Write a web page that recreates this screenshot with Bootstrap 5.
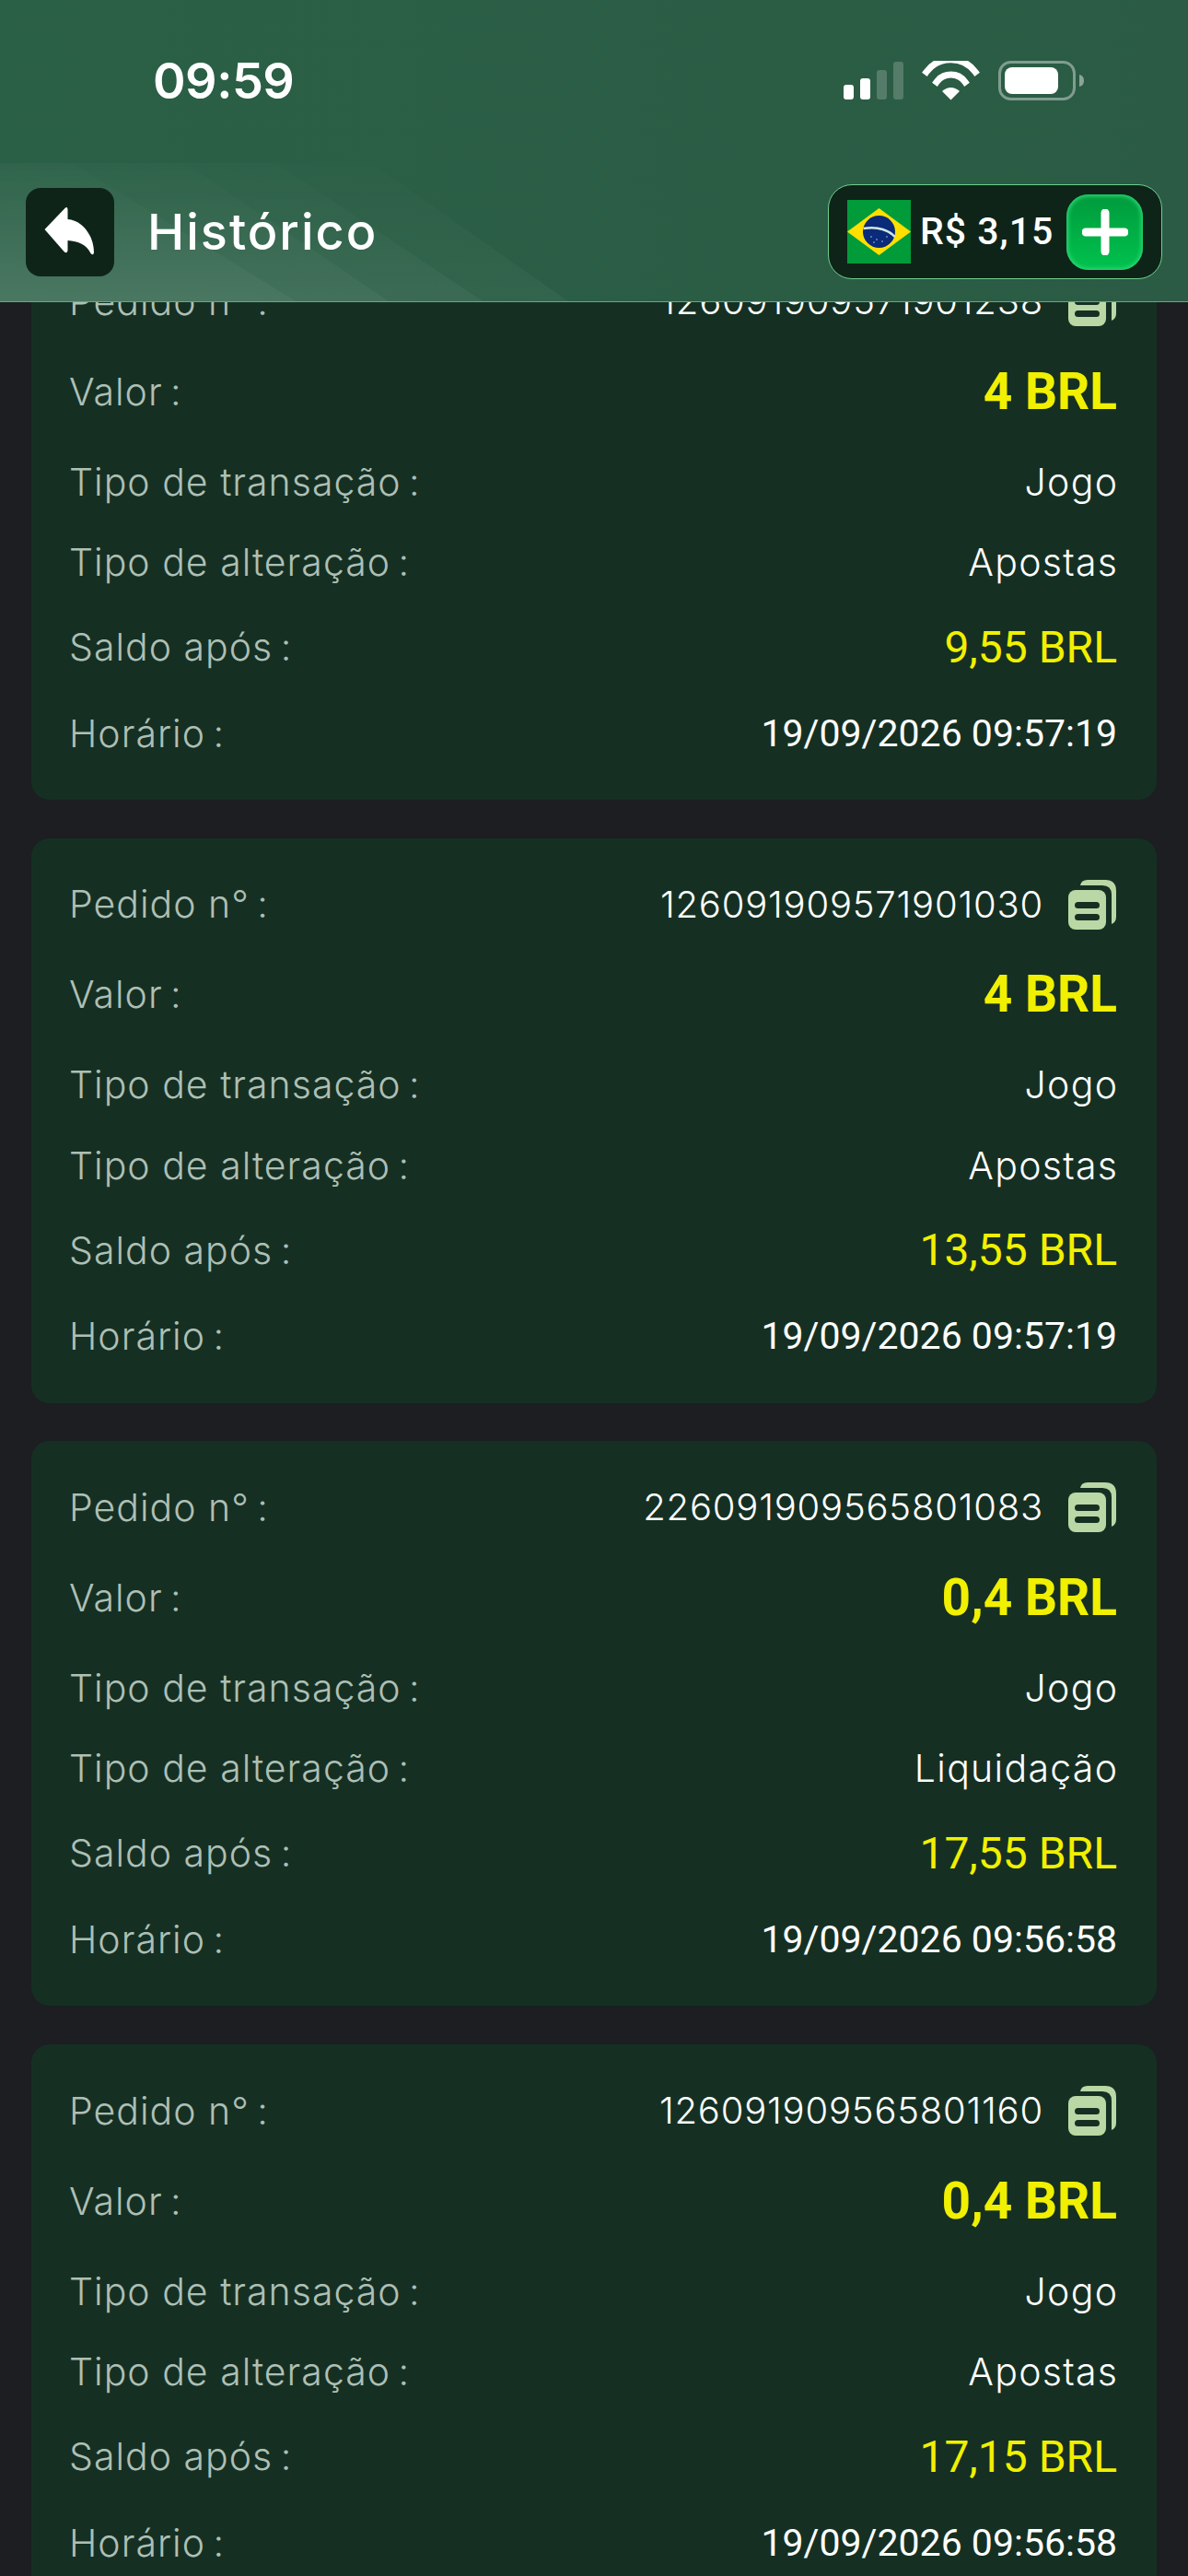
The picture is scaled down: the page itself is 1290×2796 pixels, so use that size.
<!DOCTYPE html>
<html lang="pt-BR">
<head>
<meta charset="utf-8">
<title>Histórico</title>
<link href="https://cdn.jsdelivr.net/npm/bootstrap@5.3.0/dist/css/bootstrap.min.css" rel="stylesheet">
<style>
html,body{margin:0;height:2796px;overflow:hidden;background:#1c1e22}
.app-screen{height:2796px;background:#1c1e22;font-family:Inter,"Noto Sans",sans-serif}
.top-head{height:328px;background:linear-gradient(90deg,#2a6046,#2b5b44);border-bottom:1px solid #5fae7e;position:relative;overflow:hidden}
.head-art{position:absolute;left:0;top:0}
.status-line{height:176px;padding:0 113px 0 166px;position:relative}
.clock{font-family:Inter,sans-serif;font-weight:600;font-size:54px;letter-spacing:-.5px;color:#fff;line-height:1}
.nav-line{height:151px;padding:0 28px;position:relative}
.back-btn{width:96px;height:96px;border-radius:16px;background:#0f2419;border:0;padding:0}
.back-btn svg{display:block}
.page-title{margin-left:36px;font-size:54px;font-weight:500;letter-spacing:2px;color:#fff;line-height:1}
.bal-pill{width:363px;height:103px;border:1px solid #6ed08f;border-radius:26px;background:#0f2419;padding:0 20px 0 20px}
.bal-text{font-family:Roboto,sans-serif;font-weight:500;font-size:41px;letter-spacing:1px;color:#fff;margin-left:10px;line-height:1;white-space:nowrap}
.plus-btn{width:83px;height:82px;border-radius:24px;background:linear-gradient(#009a3c,#00c24e);box-shadow:inset 0 0 4px 2px #2bd673;border:0;padding:0}
.plus-btn svg{display:block;margin:auto}
.scroll-area{height:2468px;overflow:hidden}
.scroll-inner{margin-top:-73px;padding:0 34px;display:flex;flex-direction:column;gap:41.7px}
.rec-card{background:#153023;border-radius:20px;padding:23px 43px 29px 41px;height:613px;flex:none}
.rec-line{color:#fff;white-space:nowrap}
.h-a{height:98px}.h-b{height:77px}.h-c{height:107px}.h-d{height:80px}
.lbl{font-weight:300;font-size:41px;letter-spacing:1px;color:#aebfb5;line-height:1}
.val{font-weight:300;font-size:41px;letter-spacing:1.3px;margin-right:-1.3px;color:#fff;line-height:1}
.order{font-weight:300;font-size:40px;letter-spacing:.8px;color:#fff;line-height:1}
.num{font-family:Roboto,sans-serif;font-size:48px;font-weight:400;color:#f0f000;line-height:1}
.big{font-family:Roboto,sans-serif;font-size:55px;font-weight:700;color:#f0f000;line-height:1}
.dt{font-family:Roboto,sans-serif;font-size:41px;font-weight:400;color:#fff;line-height:1}
.copy-ico{margin:0 1px 0 27px;flex:none;display:block}
</style>
</head>
<body>
<div class="app-screen">
  <header class="top-head">
    <svg class="head-art" width="1290" height="328" viewBox="0 0 1290 328" aria-hidden="true">
      <defs><linearGradient id="fadeA" gradientUnits="userSpaceOnUse" x1="0" y1="327" x2="0" y2="177"><stop offset="0" stop-color="#fff" stop-opacity=".04"/><stop offset="1" stop-color="#fff" stop-opacity=".008"/></linearGradient></defs>
      <polygon points="0,177 78,177 321,327 0,327" fill="url(#fadeA)"/>
      <polygon points="0,177 201,177 422,327 0,327" fill="url(#fadeA)"/>
      <polygon points="0,177 300,177 524,327 0,327" fill="url(#fadeA)"/>
      <polygon points="0,177 403,177 617,327 0,327" fill="url(#fadeA)"/>
    </svg>
    <div class="status-line d-flex align-items-center justify-content-between">
      <span class="clock">09:59</span>
      <svg width="261" height="44" viewBox="916 65 261 44" aria-hidden="true">
        <rect x="916" y="91" width="11" height="16" rx="3" fill="#fff"/>
        <rect x="934" y="84" width="11" height="23" rx="3" fill="#fff"/>
        <rect x="952" y="75" width="11" height="32" rx="3" fill="#fff" fill-opacity=".2"/>
        <rect x="970" y="66" width="11" height="41" rx="3" fill="#fff" fill-opacity=".2"/>
        <path d="M1006 80a33 33 0 0 1 53 0" fill="none" stroke="#fff" stroke-width="7" stroke-linecap="square" transform="translate(0 -3)"/>
        <path d="M1017 89a19 19 0 0 1 31 0" fill="none" stroke="#fff" stroke-width="7" stroke-linecap="square" transform="translate(0 -1)"/>
        <path d="M1023 98q9.500-8 19 0l-9.500 9.500z" fill="#fff"/>
        <rect x="1085.500" y="66.500" width="81" height="40" rx="12" fill="none" stroke="#fff" stroke-opacity=".4" stroke-width="3"/>
        <rect x="1091" y="72" width="58" height="29" rx="8" fill="#fff"/>
        <path d="M1172 80q5 1 5 6.500t-5 6.500z" fill="#fff" fill-opacity=".45"/>
      </svg>
    </div>
    <div class="nav-line d-flex align-items-center justify-content-between">
      <div class="d-flex align-items-center">
        <button class="back-btn" type="button" aria-label="Voltar">
          <svg width="96" height="96" viewBox="0 0 96 96"><path d="M43 21.500q2-1.500 2.500 1.500v11c16 1 28.500 18 28.500 36q-.5 4-3.500 1c-5-10-13-13-25-14v11q-1 4-4 1l-21-24z" fill="#fff"/></svg>
        </button>
        <span class="page-title">Histórico</span>
      </div>
      <div class="bal-pill d-flex align-items-center">
        <svg width="69" height="69" viewBox="0 0 69 69" class="flex-none" aria-hidden="true">
          <rect width="69" height="69" fill="#029b3a"/>
          <polygon points="34.500,9 69,34.500 34.500,60 0,34.500" fill="#fedf00"/>
          <circle cx="34.500" cy="34.500" r="17.500" fill="#0a2a7a"/>
          <path d="M17.500 31q12-2 21 1t13 8" fill="none" stroke="#cfe6e0" stroke-width="2.500"/>
          <g fill="#b8c8e8"><circle cx="26" cy="40" r=".8"/><circle cx="32" cy="43" r=".8"/><circle cx="38" cy="45" r=".8"/><circle cx="43" cy="40" r=".8"/><circle cx="29" cy="46" r=".8"/></g>
        </svg>
        <span class="bal-text flex-grow-1">R$ 3,15</span>
        <button class="plus-btn" type="button" aria-label="Adicionar">
          <svg width="50" height="50" viewBox="0 0 50 50"><path d="M25 4v42M4 25h42" stroke="#fff" stroke-width="9" stroke-linecap="round"/></svg>
        </button>
      </div>
    </div>
  </header>
  <main class="scroll-area">
    <div class="scroll-inner">

      <section class="rec-card">
        <div class="rec-line h-a d-flex align-items-center justify-content-between"><span class="lbl">Pedido n°&#8201;:</span><span class="d-flex align-items-center"><span class="order">126091909571901238</span><svg class="copy-ico" width="52" height="54" viewBox="0 0 52 54" aria-hidden="true"><path d="M13 6q1-6 8-6h19q12 0 12 12v28q0 6-5 8V16q0-10-10-10z" fill="#bad8a6"/><rect y="11" width="41" height="43" rx="8" fill="#bad8a6"/><rect x="7" y="24" width="27" height="7" rx="3.500" fill="#153023"/><rect x="7" y="37" width="27" height="7" rx="3.500" fill="#153023"/></svg></span></div>
        <div class="rec-line h-a d-flex align-items-center justify-content-between"><span class="lbl">Valor&#8201;:</span><span class="big">4 BRL</span></div>
        <div class="rec-line h-a d-flex align-items-center justify-content-between"><span class="lbl">Tipo de transação&#8201;:</span><span class="val">Jogo</span></div>
        <div class="rec-line h-b d-flex align-items-center justify-content-between"><span class="lbl">Tipo de alteração&#8201;:</span><span class="val">Apostas</span></div>
        <div class="rec-line h-c d-flex align-items-center justify-content-between"><span class="lbl">Saldo após&#8201;:</span><span class="num">9,55 BRL</span></div>
        <div class="rec-line h-d d-flex align-items-center justify-content-between"><span class="lbl">Horário&#8201;:</span><span class="dt">19/09/2026 09:57:19</span></div>
      </section>

      <section class="rec-card">
        <div class="rec-line h-a d-flex align-items-center justify-content-between"><span class="lbl">Pedido n°&#8201;:</span><span class="d-flex align-items-center"><span class="order">126091909571901030</span><svg class="copy-ico" width="52" height="54" viewBox="0 0 52 54" aria-hidden="true"><path d="M13 6q1-6 8-6h19q12 0 12 12v28q0 6-5 8V16q0-10-10-10z" fill="#bad8a6"/><rect y="11" width="41" height="43" rx="8" fill="#bad8a6"/><rect x="7" y="24" width="27" height="7" rx="3.500" fill="#153023"/><rect x="7" y="37" width="27" height="7" rx="3.500" fill="#153023"/></svg></span></div>
        <div class="rec-line h-a d-flex align-items-center justify-content-between"><span class="lbl">Valor&#8201;:</span><span class="big">4 BRL</span></div>
        <div class="rec-line h-a d-flex align-items-center justify-content-between"><span class="lbl">Tipo de transação&#8201;:</span><span class="val">Jogo</span></div>
        <div class="rec-line h-b d-flex align-items-center justify-content-between"><span class="lbl">Tipo de alteração&#8201;:</span><span class="val">Apostas</span></div>
        <div class="rec-line h-c d-flex align-items-center justify-content-between"><span class="lbl">Saldo após&#8201;:</span><span class="num">13,55 BRL</span></div>
        <div class="rec-line h-d d-flex align-items-center justify-content-between"><span class="lbl">Horário&#8201;:</span><span class="dt">19/09/2026 09:57:19</span></div>
      </section>

      <section class="rec-card">
        <div class="rec-line h-a d-flex align-items-center justify-content-between"><span class="lbl">Pedido n°&#8201;:</span><span class="d-flex align-items-center"><span class="order">226091909565801083</span><svg class="copy-ico" width="52" height="54" viewBox="0 0 52 54" aria-hidden="true"><path d="M13 6q1-6 8-6h19q12 0 12 12v28q0 6-5 8V16q0-10-10-10z" fill="#bad8a6"/><rect y="11" width="41" height="43" rx="8" fill="#bad8a6"/><rect x="7" y="24" width="27" height="7" rx="3.500" fill="#153023"/><rect x="7" y="37" width="27" height="7" rx="3.500" fill="#153023"/></svg></span></div>
        <div class="rec-line h-a d-flex align-items-center justify-content-between"><span class="lbl">Valor&#8201;:</span><span class="big">0,4 BRL</span></div>
        <div class="rec-line h-a d-flex align-items-center justify-content-between"><span class="lbl">Tipo de transação&#8201;:</span><span class="val">Jogo</span></div>
        <div class="rec-line h-b d-flex align-items-center justify-content-between"><span class="lbl">Tipo de alteração&#8201;:</span><span class="val">Liquidação</span></div>
        <div class="rec-line h-c d-flex align-items-center justify-content-between"><span class="lbl">Saldo após&#8201;:</span><span class="num">17,55 BRL</span></div>
        <div class="rec-line h-d d-flex align-items-center justify-content-between"><span class="lbl">Horário&#8201;:</span><span class="dt">19/09/2026 09:56:58</span></div>
      </section>

      <section class="rec-card">
        <div class="rec-line h-a d-flex align-items-center justify-content-between"><span class="lbl">Pedido n°&#8201;:</span><span class="d-flex align-items-center"><span class="order">126091909565801160</span><svg class="copy-ico" width="52" height="54" viewBox="0 0 52 54" aria-hidden="true"><path d="M13 6q1-6 8-6h19q12 0 12 12v28q0 6-5 8V16q0-10-10-10z" fill="#bad8a6"/><rect y="11" width="41" height="43" rx="8" fill="#bad8a6"/><rect x="7" y="24" width="27" height="7" rx="3.500" fill="#153023"/><rect x="7" y="37" width="27" height="7" rx="3.500" fill="#153023"/></svg></span></div>
        <div class="rec-line h-a d-flex align-items-center justify-content-between"><span class="lbl">Valor&#8201;:</span><span class="big">0,4 BRL</span></div>
        <div class="rec-line h-a d-flex align-items-center justify-content-between"><span class="lbl">Tipo de transação&#8201;:</span><span class="val">Jogo</span></div>
        <div class="rec-line h-b d-flex align-items-center justify-content-between"><span class="lbl">Tipo de alteração&#8201;:</span><span class="val">Apostas</span></div>
        <div class="rec-line h-c d-flex align-items-center justify-content-between"><span class="lbl">Saldo após&#8201;:</span><span class="num">17,15 BRL</span></div>
        <div class="rec-line h-d d-flex align-items-center justify-content-between"><span class="lbl">Horário&#8201;:</span><span class="dt">19/09/2026 09:56:58</span></div>
      </section>

    </div>
  </main>
</div>
<script src="https://cdn.jsdelivr.net/npm/bootstrap@5.3.0/dist/js/bootstrap.bundle.min.js"></script>
</body>
</html>
